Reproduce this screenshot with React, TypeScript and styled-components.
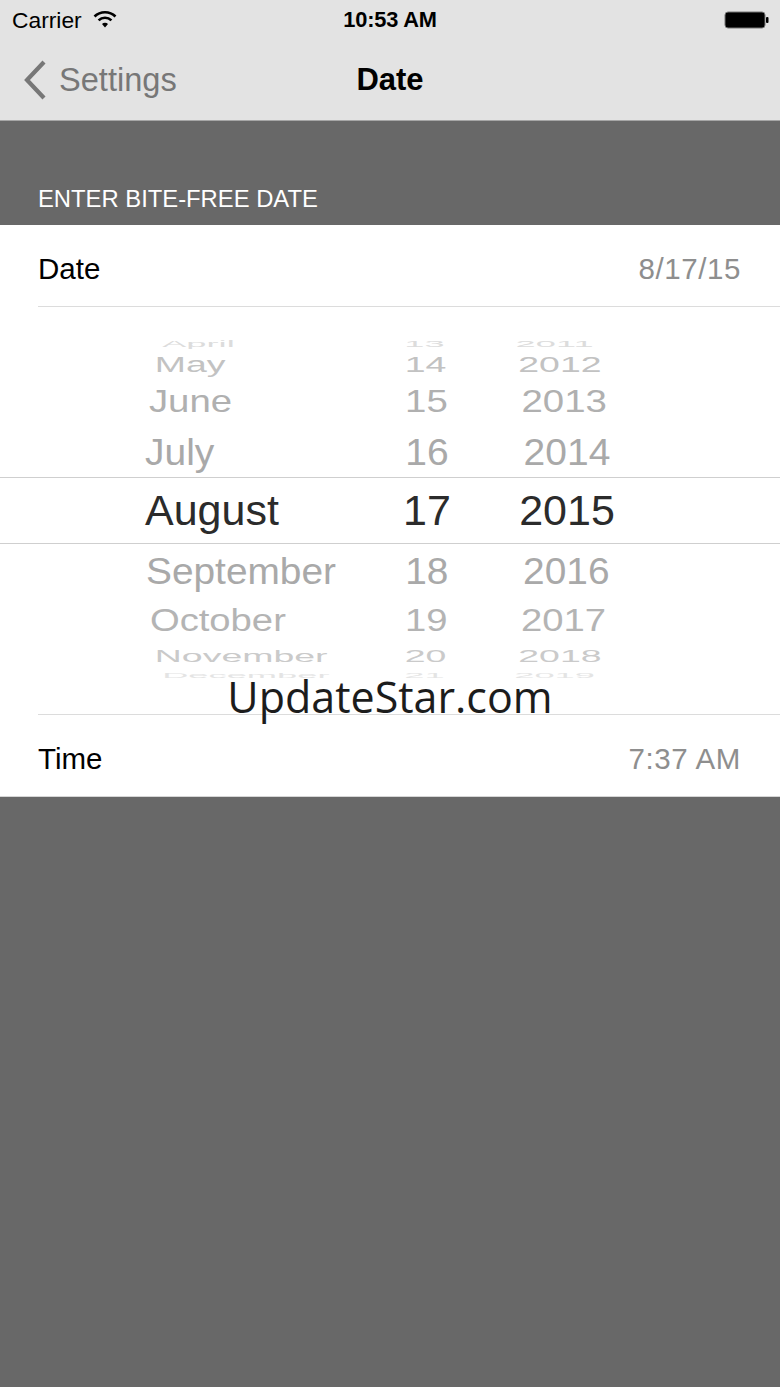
import styled, { createGlobalStyle } from 'styled-components'

const GlobalStyle = createGlobalStyle`
  html, body {
    margin: 0;
    padding: 0;
    background: #686868;
  }
  * {
    box-sizing: border-box;
  }
`

type WheelRow = {
  month: string
  day: string
  year: string
  height: number
  sx: number
  sy: number
  color: string
}

const above: WheelRow[] = [
  { month: 'April', day: '13', year: '2011', height: 14, sx: 0.93, sy: 0.22, color: '#dcdcdc' },
  { month: 'May', day: '14', year: '2012', height: 26, sx: 0.96, sy: 0.55, color: '#c2c2c2' },
  { month: 'June', day: '15', year: '2013', height: 48, sx: 0.984, sy: 0.8, color: '#b0b0b0' },
  { month: 'July', day: '16', year: '2014', height: 52, sx: 1, sy: 0.97, color: '#a9a9a9' },
]

const below: WheelRow[] = [
  { month: 'September', day: '18', year: '2016', height: 54, sx: 0.996, sy: 0.93, color: '#a9a9a9' },
  { month: 'October', day: '19', year: '2017', height: 44, sx: 0.98, sy: 0.78, color: '#b4b4b4' },
  { month: 'November', day: '20', year: '2018', height: 28, sx: 0.96, sy: 0.42, color: '#cacaca' },
  { month: 'December', day: '21', year: '2019', height: 10, sx: 0.93, sy: 0.18, color: '#e4e4e4' },
]

const WifiIcon = () => (
  <svg width='24' height='18' viewBox='0 0 24 18'>
    <path d='M1.5 6.5 A15 15 0 0 1 22.5 6.5' fill='none' stroke='#000' strokeWidth='2.6' />
    <path d='M5.6 10.4 A9 9 0 0 1 18.4 10.4' fill='none' stroke='#000' strokeWidth='2.6' />
    <path d='M9 14 L12 17.5 L15 14 A4.2 4.2 0 0 0 9 14 Z' fill='#000' />
  </svg>
)

const BatteryIcon = () => (
  <svg width='46' height='18' viewBox='0 0 46 18'>
    <rect x='1' y='1' width='40' height='16' rx='3' fill='#000' stroke='#777' strokeWidth='1' />
    <rect x='42' y='6' width='2.5' height='6' rx='1' fill='#000' />
  </svg>
)

const BackChevron = () => (
  <svg width='24' height='40' viewBox='0 0 24 40'>
    <path d='M21 2 L4 20 L21 38' fill='none' stroke='#777' strokeWidth='4.2' />
  </svg>
)

const App = () => {
  const renderRow = (row: WheelRow) => (
    <PickerRow key={row.month} $height={row.height}>
      <RowText $sx={row.sx} $sy={row.sy} $color={row.color} $size={39}>
        <MonthCell>{row.month}</MonthCell>
        <DayCell>{row.day}</DayCell>
        <YearCell>{row.year}</YearCell>
      </RowText>
    </PickerRow>
  )

  return (
    <>
      <GlobalStyle />
      <Page>
        <StatusBar>
          <Carrier>
            Carrier
            <WifiIcon />
          </Carrier>
          <Clock>10:53 AM</Clock>
          <Battery>
            <BatteryIcon />
          </Battery>
        </StatusBar>

        <NavBar>
          <BackButton>
            <BackChevron />
            Settings
          </BackButton>
          <NavTitle>Date</NavTitle>
          <span />
        </NavBar>

        <SectionHeader>ENTER BITE-FREE DATE</SectionHeader>

        <Group>
          <Cell>
            <CellInner $separator='bottom'>
              <CellLabel>Date</CellLabel>
              <CellValue>8/17/15</CellValue>
            </CellInner>
          </Cell>

          <Picker>
            <PickerSpacer $height={30} />
            {above.map(renderRow)}
            <SelectedRow>
              <RowText $sx={1} $sy={1} $color='#2b2b2b' $size={43}>
                <MonthCell>August</MonthCell>
                <DayCell>17</DayCell>
                <YearCell>2015</YearCell>
              </RowText>
            </SelectedRow>
            {below.map(renderRow)}
          </Picker>

          <Cell>
            <CellInner $separator='top'>
              <CellLabel>Time</CellLabel>
              <CellValue>7:37 AM</CellValue>
            </CellInner>
          </Cell>

          <Watermark>UpdateStar.com</Watermark>
        </Group>
      </Page>
    </>
  )
}

export default App

const Page = styled.div`
  width: 780px;
  min-height: 1387px;
  display: flex;
  flex-direction: column;
  background: #686868;
  font-family: 'Liberation Sans', Arial, sans-serif;
`

const StatusBar = styled.div`
  height: 40px;
  display: grid;
  grid-template-columns: 1fr auto 1fr;
  align-items: center;
  padding: 0 12px;
  background: #e3e3e3;
  color: #000;
`

const Carrier = styled.div`
  display: flex;
  align-items: center;
  gap: 11px;
  font-size: 22.8px;

  svg {
    margin-top: -3px;
  }
`

const Clock = styled.div`
  font-size: 21.8px;
  font-weight: 700;
  letter-spacing: -0.2px;
`

const Battery = styled.div`
  display: flex;
  justify-content: flex-end;
  margin-right: -2px;
`

const NavBar = styled.div`
  height: 81px;
  display: grid;
  grid-template-columns: 1fr auto 1fr;
  align-items: center;
  background: #e3e3e3;
  border-bottom: 1px solid #a6a6a6;
  padding-bottom: 1px;
`

const BackButton = styled.div`
  display: flex;
  align-items: center;
  gap: 12px;
  padding-left: 23px;
  font-size: 32.6px;
  color: #777;
`

const NavTitle = styled.div`
  font-size: 31px;
  font-weight: 700;
  color: #000;
`

const SectionHeader = styled.div`
  height: 104px;
  display: flex;
  align-items: flex-end;
  padding: 0 0 13px 38px;
  font-size: 23.8px;
  line-height: 27px;
  color: #fff;
`

const Group = styled.div`
  position: relative;
  background: #fff;
  border-bottom: 1px solid #d6d6d6;
`

const Cell = styled.div`
  padding-left: 38px;
`

const CellInner = styled.div<{ $separator: 'top' | 'bottom' }>`
  height: 82px;
  display: flex;
  align-items: center;
  justify-content: space-between;
  padding: 6px 39px 0 0;
  border-${({ $separator }) => $separator}: 1px solid #dcdcdc;
`

const CellLabel = styled.span`
  font-size: 29.5px;
  color: #000;
`

const CellValue = styled.span`
  font-size: 29.5px;
  letter-spacing: 0.6px;
  color: #8e8e8e;
`

const Picker = styled.div`
  height: 407px;
  display: flex;
  flex-direction: column;
  overflow: hidden;
`

const PickerSpacer = styled.div<{ $height: number }>`
  height: ${({ $height }) => $height}px;
  flex-shrink: 0;
`

const PickerRow = styled.div<{ $height: number }>`
  height: ${({ $height }) => $height}px;
  flex-shrink: 0;
  display: flex;
  align-items: center;
`

const SelectedRow = styled.div`
  height: 67px;
  flex-shrink: 0;
  display: flex;
  align-items: center;
  border-top: 1px solid #cfcfcf;
  border-bottom: 1px solid #cfcfcf;
`

const RowText = styled.div<{ $sx: number; $sy: number; $color: string; $size: number }>`
  width: 100%;
  display: flex;
  align-items: center;
  padding-left: 145px;
  font-size: ${({ $size }) => $size}px;
  line-height: 1;
  color: ${({ $color }) => $color};
  transform: scale(${({ $sx, $sy }) => `${$sx}, ${$sy}`});
  transform-origin: 390px center;
  white-space: nowrap;
`

const MonthCell = styled.span`
  width: 232px;
`

const DayCell = styled.span`
  width: 100px;
  text-align: center;
`

const YearCell = styled.span`
  width: 120px;
  margin-left: 30px;
  text-align: center;
`

const Watermark = styled.div`
  position: absolute;
  left: 0;
  right: 0;
  top: 447px;
  text-align: center;
  font-family: 'Open Sans', 'DejaVu Sans', sans-serif;
  font-size: 43px;
  line-height: 50px;
  color: #1c1c1c;
  pointer-events: none;
`
